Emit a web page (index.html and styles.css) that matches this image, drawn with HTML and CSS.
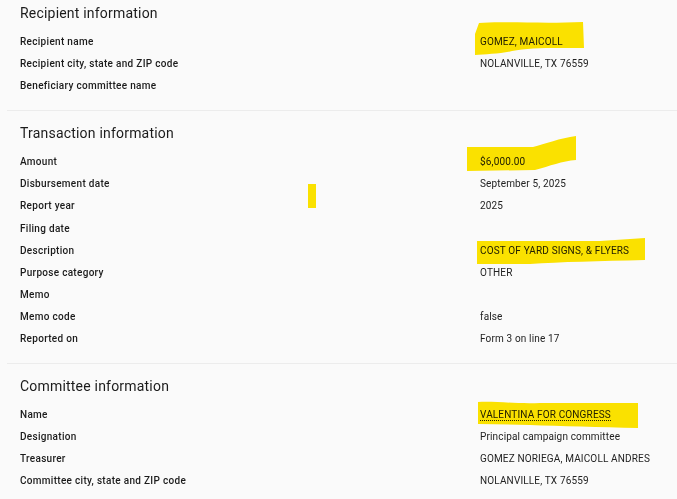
FILE: index.html
```html
<!DOCTYPE html>
<html lang="en">
<head>
<meta charset="utf-8">
<title>Disbursement details</title>
<link rel="stylesheet" href="styles.css">
</head>
<body>
<main class="page">
  <section class="panel panel-first">
    <h2 class="panel-title">Recipient information</h2>
    <dl class="facts">
      <dt>Recipient name</dt><dd>GOMEZ, MAICOLL</dd>
      <dt>Recipient city, state and ZIP code</dt><dd>NOLANVILLE, TX 76559</dd>
      <dt>Beneficiary committee name</dt><dd></dd>
    </dl>
  </section>
  <section class="panel">
    <h2 class="panel-title">Transaction information</h2>
    <dl class="facts">
      <dt>Amount</dt><dd>$6,000.00</dd>
      <dt>Disbursement date</dt><dd>September 5, 2025</dd>
      <dt>Report year</dt><dd>2025</dd>
      <dt>Filing date</dt><dd></dd>
      <dt>Description</dt><dd>COST OF YARD SIGNS, &amp; FLYERS</dd>
      <dt>Purpose category</dt><dd>OTHER</dd>
      <dt>Memo</dt><dd></dd>
      <dt>Memo code</dt><dd>false</dd>
      <dt>Reported on</dt><dd>Form 3 on line 17</dd>
    </dl>
  </section>
  <section class="panel panel-last">
    <h2 class="panel-title">Committee information</h2>
    <dl class="facts">
      <dt>Name</dt><dd><a class="link" href="#">VALENTINA FOR CONGRESS</a></dd>
      <dt>Designation</dt><dd>Principal campaign committee</dd>
      <dt>Treasurer</dt><dd>GOMEZ NORIEGA, MAICOLL ANDRES</dd>
      <dt>Committee city, state and ZIP code</dt><dd>NOLANVILLE, TX 76559</dd>
    </dl>
  </section>
  <svg class="marks" width="677" height="499" viewBox="0 0 677 499" aria-hidden="true">
    <path d="M479 23 C500 21 540 24 583 22 L584 48 C560 48 530 47 512 51 C500 54 485 54 475 55 L475 34 Z"/>
    <path d="M467 147 L533 147 C545 144 560 138 576 136 L576 160 C562 161 550 166 535 170 L467 171 Z"/>
    <rect x="308" y="184" width="8" height="24"/>
    <path d="M477 241 L600 241 C615 240 630 239 645 238 L645 260 C600 261 560 262 530 264 L477 264 Z"/>
    <path d="M478 402 C495 401 515 404 540 403 L638 403 L638 428 C600 427 560 426 530 425 L478 424 Z"/>
  </svg>
</main>
</body>
</html>
```

FILE: styles.css
```css
html, body {
  margin: 0;
  padding: 0;
  background: #fafafa;
}

body {
  font-family: Roboto, "Liberation Sans", sans-serif;
  color: #212121;
  width: 677px;
  height: 499px;
  overflow: hidden;
}

.page {
  position: relative;
  padding-left: 7px;
}

.panel {
  padding: 12px 0 14px 13px;
  border-bottom: 1px solid #ececec;
}

.panel-first {
  padding-top: 3px;
}

.panel-last {
  border-bottom: none;
}

.panel-title {
  margin: 0 0 7px;
  font-size: 14px;
  line-height: 20px;
  font-weight: 400;
  letter-spacing: 0.2px;
  color: #1b1b1b;
}

.facts {
  margin: 0;
  display: grid;
  grid-template-columns: 460px 1fr;
  grid-auto-rows: 22.1px;
  align-items: start;
  font-size: 10px;
  line-height: 14px;
}

.facts dt,
.facts dd {
  padding-top: 5px;
}

.facts dt {
  font-weight: 500;
  letter-spacing: 0.3px;
  color: #1b1b1b;
}

.facts dd {
  margin: 0;
  letter-spacing: 0.15px;
  color: #222;
}

.link {
  color: #222;
  text-decoration: none;
  border-bottom: 1px dotted #222;
}

.marks {
  position: absolute;
  left: 0;
  top: 0;
  pointer-events: none;
  mix-blend-mode: multiply;
  fill: #ffe600;
}
```
